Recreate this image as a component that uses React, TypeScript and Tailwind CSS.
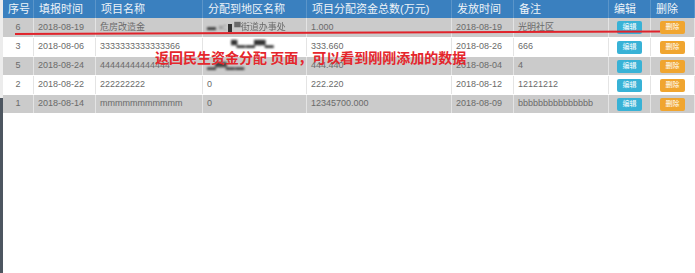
import React from "react";

interface IRow {
  no: string;
  date: string;
  name: string;
  area: React.ReactNode;
  amount: string;
  issued: string;
  note: string;
}

const font = { fontFamily: '"Liberation Sans", "Noto Sans CJK SC", sans-serif' };

const cols = [31, 62, 107, 104, 145, 62, 95, 42, 44];
const headers = ["序号", "填报时间", "项目名称", "分配到地区名称", "项目分配资金总数(万元)", "发放时间", "备注", "编辑", "删除"];

const rows: IRow[] = [
  {
    no: "6",
    date: "2018-08-19",
    name: "危房改造金",
    area: (
      <span className="flex items-center gap-[2px]">
        <span className="blur-[1px] text-[#333]">▬ =:</span>
        <span className="inline-block w-[4px] h-[8px] bg-[#333] blur-[0.5px]" />
        <span className="blur-[0.6px]">▀街道办事处</span>
      </span>
    ),
    amount: "1.000",
    issued: "2018-08-19",
    note: "光明社区",
  },
  {
    no: "3",
    date: "2018-08-06",
    name: "3333333333333366",
    area: (
      <span className="block -mt-[3px] ml-[24px] text-[#333] blur-[1.2px] tracking-[-1px]">▀▬ ▬▀▀▬</span>
    ),
    amount: "333.660",
    issued: "2018-08-26",
    note: "666",
  },
  {
    no: "5",
    date: "2018-08-24",
    name: "44444444444444",
    area: <span className="block mt-[4px] text-[#444] blur-[1.2px] tracking-[-1px]">▬▀▀▬ ▬</span>,
    amount: "444.440",
    issued: "2018-08-04",
    note: "4",
  },
  { no: "2", date: "2018-08-22", name: "222222222", area: "0", amount: "222.220", issued: "2018-08-12", note: "12121212" },
  {
    no: "1",
    date: "2018-08-14",
    name: "mmmmmmmmmmm",
    area: "0",
    amount: "12345700.000",
    issued: "2018-08-09",
    note: "bbbbbbbbbbbbbbb",
  },
];

const Cell: React.FC<{ w: number; center?: boolean; children?: React.ReactNode }> = ({ w, center, children }) => (
  <div
    className={`h-full flex items-center border-r border-[#e4e4e4] px-[4px] overflow-hidden whitespace-nowrap ${
      center ? "justify-center" : ""
    }`}
    style={{ width: w }}
  >
    {children}
  </div>
);

export default function App() {
  return (
    <div className="relative w-[695px] h-[273px] bg-white flex overflow-hidden" style={font}>
      {/* left strip */}
      <div className="w-[3px] flex flex-col">
        <div className="h-[98px] bg-[#ececec]" />
        <div className="flex-1 bg-[#4d5660]" />
      </div>

      <div className="flex-1">
        {/* header */}
        <div className="flex h-[18px] bg-[#3a80bf] text-[#eef3f8] text-[11px]">
          {headers.map((h, i) => (
            <div
              key={i}
              className="h-full flex items-center px-[5px] border-r border-[#5b95c9] whitespace-nowrap overflow-hidden"
              style={{ width: cols[i] }}
            >
              {h}
            </div>
          ))}
        </div>

        {/* rows */}
        {rows.map((r, i) => (
          <div
            key={i}
            className={`flex ${i === 0 ? "h-[20px]" : "h-[19px]"} border-b border-white text-[9px] text-[#6a6a6a] ${
              i % 2 === 0 ? "bg-[#cbcbcb]" : "bg-white"
            }`}
          >
            <Cell w={cols[0]} center>
              {r.no}
            </Cell>
            <Cell w={cols[1]}>{r.date}</Cell>
            <Cell w={cols[2]}>{r.name}</Cell>
            <Cell w={cols[3]}>{r.area}</Cell>
            <Cell w={cols[4]}>{r.amount}</Cell>
            <Cell w={cols[5]}>{r.issued}</Cell>
            <Cell w={cols[6]}>{r.note}</Cell>
            <Cell w={cols[7]} center>
              <span className="w-[25px] h-[13px] rounded-[2px] bg-[#38b2d6] text-white text-[7px] flex items-center justify-center">
                编辑
              </span>
            </Cell>
            <Cell w={cols[8]} center>
              <span className="w-[25px] h-[13px] rounded-[2px] bg-[#f0a52f] text-white text-[7px] flex items-center justify-center">
                删除
              </span>
            </Cell>
          </div>
        ))}
      </div>

      {/* annotation overlay */}
      <svg className="absolute left-0 top-0 pointer-events-none" width="695" height="273">
        <line x1="15" y1="34" x2="660" y2="31.5" stroke="#e0232b" strokeWidth="2" />
      </svg>
      <div
        className="absolute left-[155px] top-[50px] text-[14px] font-bold text-[#e5262c] whitespace-nowrap leading-none"
        style={{ fontFamily: '"Noto Sans CJK SC", sans-serif' }}
      >
        返回民生资金分配 页面，可以看到刚刚添加的数据
      </div>
    </div>
  );
}
